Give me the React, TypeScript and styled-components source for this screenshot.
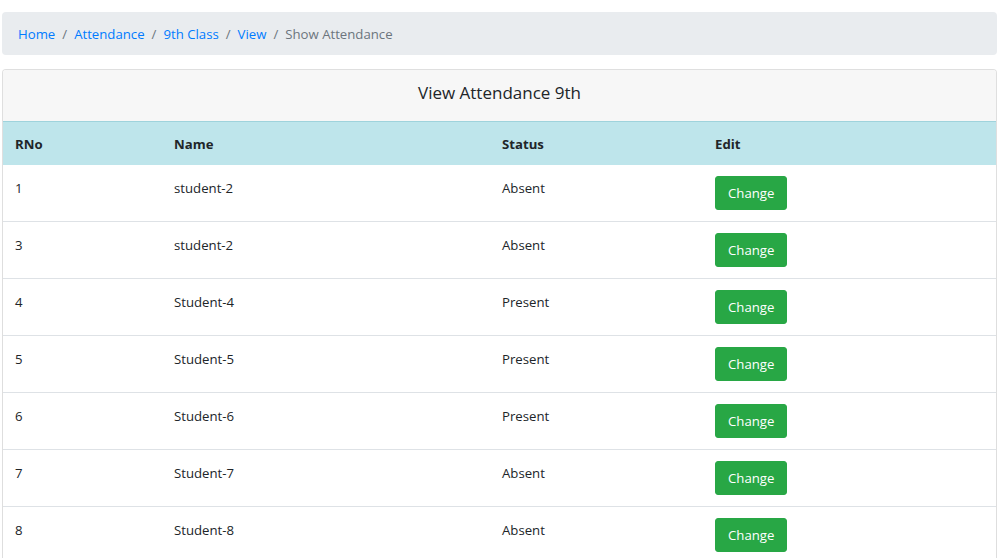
import styled, { createGlobalStyle } from "styled-components";

const GlobalStyle = createGlobalStyle`
  body {
    margin: 0;
    font-family: "Open Sans", "Noto Sans", sans-serif;
    font-size: 13.2px;
    color: #212529;
    background: #fff;
  }
`;

//#region --- Page styles ---
const Page = styled.div`
  padding: 12px 1px 0 2px;
  display: flex;
  flex-direction: column;
  gap: 14px;
`;

const Crumbs = styled.nav`
  display: flex;
  align-items: center;
  background: #e9ecef;
  border-radius: 4px;
  padding: 12px 16px 10px;
  line-height: 21px;
`;

const Crumb = styled.a<{ $active?: boolean }>`
  color: ${(p) => (p.$active ? "#6c757d" : "#007bff")};
  text-decoration: none;
`;

const Sep = styled.span`
  color: #6c757d;
  padding: 0 7px;
`;

const Card = styled.section`
  border: 1px solid rgba(0, 0, 0, 0.125);
  border-bottom: none;
  border-radius: 4px 4px 0 0;
  overflow: hidden;
`;

const CardHeader = styled.header`
  background: #f7f7f7;
  text-align: center;
  font-size: 17px;
  line-height: 27px;
  padding: 9px 0 15px;
`;

const Table = styled.table`
  width: 100%;
  border-collapse: collapse;
  table-layout: fixed;
`;

const HeadRow = styled.tr`
  background: #bee5eb;
  border-top: 1px solid #9fd3dc;
`;

const Th = styled.th`
  text-align: left;
  font-weight: 700;
  padding: 12px 12px 10px;
  line-height: 21px;
`;

const BodyRow = styled.tr`
  border-bottom: 1px solid #dee2e6;
`;

const Td = styled.td`
  padding: 11px 12px;
  vertical-align: top;
  line-height: 25px;
`;

const ChangeButton = styled.button`
  display: block;
  font-family: inherit;
  font-size: 13.2px;
  line-height: 22px;
  color: #fff;
  background: #28a745;
  border: 1px solid #28a745;
  border-radius: 3px;
  padding: 5px 12px;
  cursor: pointer;
`;
//#endregion

const rows = [
  { rno: 1, name: "student-2", status: "Absent" },
  { rno: 3, name: "student-2", status: "Absent" },
  { rno: 4, name: "Student-4", status: "Present" },
  { rno: 5, name: "Student-5", status: "Present" },
  { rno: 6, name: "Student-6", status: "Present" },
  { rno: 7, name: "Student-7", status: "Absent" },
  { rno: 8, name: "Student-8", status: "Absent" },
];

const crumbs = ["Home", "Attendance", "9th Class", "View"];

const App = () => {
  return (
    <Page>
      <GlobalStyle />
      <Crumbs>
        {crumbs.map((c) => (
          <span key={c}>
            <Crumb href="#">{c}</Crumb>
            <Sep>/</Sep>
          </span>
        ))}
        <Crumb $active>Show Attendance</Crumb>
      </Crumbs>
      <Card>
        <CardHeader>View Attendance 9th</CardHeader>
        <Table>
          <colgroup>
            <col style={{ width: 159 }} />
            <col style={{ width: 328 }} />
            <col style={{ width: 213 }} />
            <col />
          </colgroup>
          <thead>
            <HeadRow>
              <Th>RNo</Th>
              <Th>Name</Th>
              <Th>Status</Th>
              <Th>Edit</Th>
            </HeadRow>
          </thead>
          <tbody>
            {rows.map((r) => (
              <BodyRow key={r.rno}>
                <Td>{r.rno}</Td>
                <Td>{r.name}</Td>
                <Td>{r.status}</Td>
                <Td>
                  <ChangeButton>Change</ChangeButton>
                </Td>
              </BodyRow>
            ))}
          </tbody>
        </Table>
      </Card>
    </Page>
  );
};

export default App;
